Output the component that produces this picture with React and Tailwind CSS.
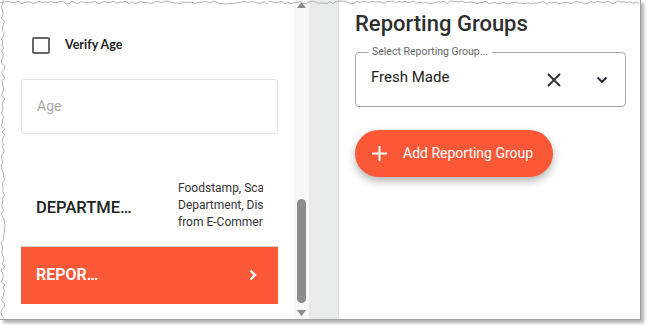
import React from "react";

const RED = "#fb5838";

// jagged "torn paper" edge, deterministic
function tornPath(length, step, amp, vertical) {
  let seed = 7;
  const rnd = () => {
    seed = (seed * 9301 + 49297) % 233280;
    return seed / 233280;
  };
  const pts = [];
  for (let i = 0; i <= length; i += step) {
    const off = 1 + rnd() * amp;
    pts.push(vertical ? `${off.toFixed(1)},${i}` : `${i},${off.toFixed(1)}`);
  }
  return pts.join(" ");
}

function TornEdges() {
  return (
    <>
      <svg className="absolute left-0 top-0" width="641" height="8" viewBox="0 0 641 8">
        <polyline points={tornPath(641, 3, 3, false)} fill="none" stroke="#b4b4b4" strokeWidth="1" />
      </svg>
      <svg className="absolute left-0 top-0" width="8" height="319" viewBox="0 0 8 319">
        <polyline points={tornPath(319, 3, 4, true)} fill="none" stroke="#b4b4b4" strokeWidth="1" />
      </svg>
    </>
  );
}

function Scrollbar() {
  return (
    <div className="w-[15px] shrink-0 bg-[#f7f7f7] flex flex-col items-center">
      <svg width="9" height="6" viewBox="0 0 9 6" className="mt-[2px]">
        <path d="M0 6 L4.5 0 L9 6 Z" fill="#8a8a8a" />
      </svg>
      <div className="flex-1" />
      <div className="w-[9px] h-[104px] rounded-full bg-[#8c8c8c]" />
      <svg width="9" height="6" viewBox="0 0 9 6" className="mt-[7px] mb-[3px]">
        <path d="M0 0 L9 0 L4.5 6 Z" fill="#8a8a8a" />
      </svg>
    </div>
  );
}

function LeftPanel() {
  return (
    <div className="w-[294px] shrink-0 bg-white flex flex-col overflow-hidden">
      <div className="flex items-center pl-[32px] pt-[36px]">
        <div className="w-[18px] h-[17px] border-2 border-[#666] rounded-[2px]" />
        <span
          className="ml-[15px] text-[12.5px] font-bold text-[#1e1e1e]"
          style={{ fontFamily: "Lato, sans-serif" }}
        >
          Verify Age
        </span>
      </div>

      <div className="mt-[24px] ml-[21px] w-[257px] h-[55px] border border-[#e4e4e4] rounded-[3px] flex items-center pl-[15px]">
        <span className="text-[14px] text-[#a9a9a9] mt-[1px]">Age</span>
      </div>

      <div className="mt-[38px] ml-[21px] w-[257px] h-[75px] flex items-center border-b border-[#d4d4d4]">
        <span className="pl-[15px] w-[157px] text-[16.5px] font-medium text-[#222]">DEPARTME…</span>
        <div className="w-[85px] overflow-hidden whitespace-nowrap text-[12px] leading-[17px] text-[#333] -mt-[6px]">
          <div>Foodstamp, Scale</div>
          <div>Department, Discount</div>
          <div>from E-Commerce</div>
        </div>
      </div>

      <div className="ml-[21px] w-[257px] h-[57px] bg-[#fb5838] flex items-center justify-between pl-[15px] pr-[20px]">
        <span className="text-[16px] font-semibold text-white">REPOR…</span>
        <svg width="10" height="12" viewBox="0 0 10 12">
          <path d="M2.5 1.5 L7 6 L2.5 10.5" fill="none" stroke="#fff" strokeWidth="2.4" />
        </svg>
      </div>
    </div>
  );
}

function RightPanel() {
  return (
    <div className="flex-1 bg-white pl-[16px] pr-[14px]">
      <h1 className="mt-[11px] text-[22px] leading-[26px] font-medium text-[#2e2e2e]">Reporting Groups</h1>

      <div className="relative mt-[15px] h-[55px] border border-[#a8a8a8] rounded-[4px] flex items-center pl-[15px] pr-[17px]">
        <span className="absolute -top-[8px] left-[12px] bg-white px-[4px] text-[10.5px] leading-[14px] text-[#666]">
          Select Reporting Group...
        </span>
        <span className="flex-1 text-[15px] text-[#222] -mt-[4px]">Fresh Made</span>
        <svg width="16" height="16" viewBox="0 0 16 16" className="mr-[34px]">
          <path d="M2 2 L14 14 M14 2 L2 14" stroke="#333" strokeWidth="1.9" />
        </svg>
        <svg width="12" height="8" viewBox="0 0 12 8">
          <path d="M1.5 1.5 L6 6 L10.5 1.5" fill="none" stroke="#223" strokeWidth="1.9" />
        </svg>
      </div>

      <button
        className="mt-[23px] w-[198px] h-[47px] rounded-full flex items-center pl-[17px] text-white shadow-[0_4px_8px_rgba(0,0,0,0.3)]"
        style={{ backgroundColor: RED }}
      >
        <svg width="15" height="15" viewBox="0 0 15 15">
          <path d="M7.5 0 V15 M0 7.5 H15" stroke="#fff" strokeWidth="2" />
        </svg>
        <span className="ml-[16px] text-[14px]">Add Reporting Group</span>
      </button>
    </div>
  );
}

export default function App() {
  return (
    <div
      className="relative w-[652px] h-[331px] bg-white overflow-hidden"
      style={{ fontFamily: "Roboto, sans-serif" }}
    >
      <div className="flex w-[641px] h-[320px] border-r border-b border-[#a0a0a0] shadow-[3px_3px_3px_rgba(0,0,0,0.3)]">
        <LeftPanel />
        <Scrollbar />
        <div className="w-[30px] shrink-0 bg-[#e9eaea] border-r border-[#dcdcdc]" />
        <RightPanel />
      </div>
      <TornEdges />
    </div>
  );
}
